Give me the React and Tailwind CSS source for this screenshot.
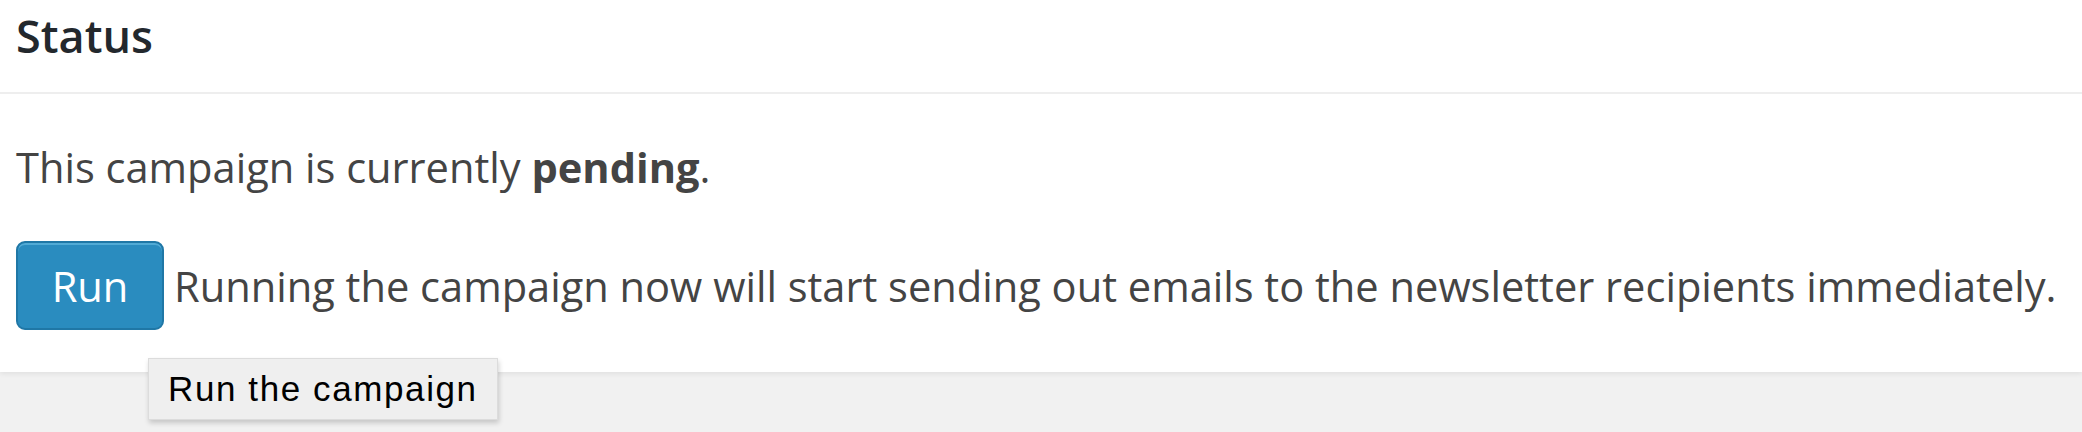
export default function App() {
  return (
    <div className="min-h-screen bg-[#f1f1f1]" style={{ fontFamily: '"Open Sans", sans-serif' }}>
      <div className="relative bg-white shadow-[0_2px_5px_rgba(0,0,0,0.07)]">
        <h2 className="px-4 pt-2 pb-[28px] border-b-2 border-[#eeeeee] text-[45px] leading-[56px] font-semibold text-[#23282d]">
          Status
        </h2>

        <div className="px-4 pt-[45px] pb-[42px] text-[#444444]">
          <p className="text-[41.6px] leading-[56px]">
            This campaign is currently <strong className="font-bold">pending</strong>.
          </p>

          <div className="mt-[46px] flex items-center">
            <button
              type="button"
              className="w-[148px] h-[89px] flex items-center justify-center rounded-[9px] border-2 border-[#1f77a6] bg-[#2a8cbf] text-white text-[41.6px] leading-[56px] shadow-[inset_0_2px_0_rgba(120,200,235,0.5)]"
            >
              Run
            </button>
            <span className="ml-[10px] text-[41.6px] leading-[56px] whitespace-nowrap">
              Running the campaign now will start sending out emails to the newsletter recipients immediately.
            </span>
          </div>
        </div>

        {/* native-looking tooltip over the button */}
        <div
          className="absolute left-[148px] top-[358px] w-[350px] h-[62px] flex items-center pl-[19px] bg-[#efefef] border border-[#dcdcdc] shadow-[1px_3px_5px_rgba(0,0,0,0.18)] text-black text-[35px] tracking-[1.6px] whitespace-nowrap"
          style={{ fontFamily: '"Liberation Sans", Arial, sans-serif' }}
        >
          Run the campaign
        </div>
      </div>
    </div>
  )
}
